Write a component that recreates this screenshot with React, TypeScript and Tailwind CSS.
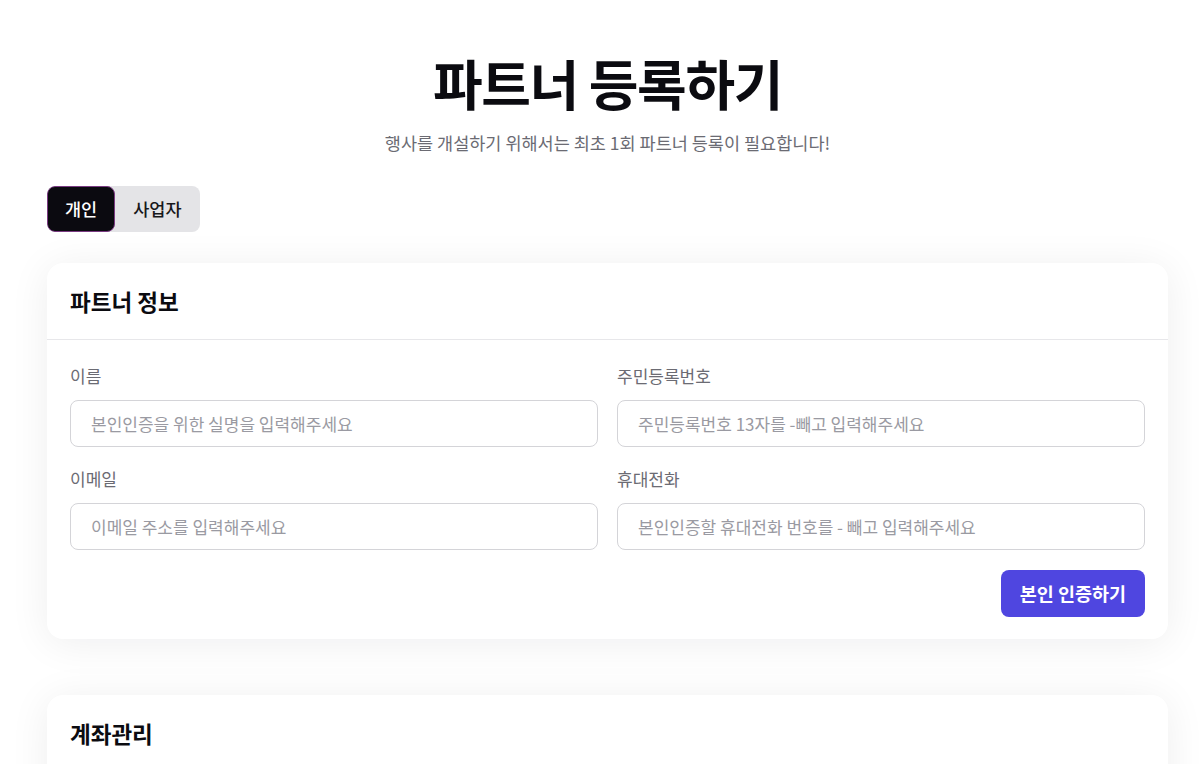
import { useState } from "react";

const font = { fontFamily: '"Noto Sans CJK KR", "Noto Sans", sans-serif' };

type FieldProps = {
  label: string;
  placeholder: string;
};

const Field = ({ label, placeholder }: FieldProps) => (
  <label className="flex flex-col gap-3">
    <span className="text-[17px] leading-6 text-[#6b6b73]">{label}</span>
    <input
      className="h-[47px] w-full rounded-lg border border-[#d4d4d8] bg-white px-5 text-[17px] text-[#18181b] outline-none placeholder:text-[#9a9aa2]"
      placeholder={placeholder}
    />
  </label>
);

export default function App() {
  const [tab, setTab] = useState<"personal" | "business">("personal");

  return (
    <div className="h-screen overflow-hidden bg-white pl-[47px] pr-[32px] pt-[56px]" style={font}>
      <div className="flex flex-col items-center">
        <h1 className="text-[54px] font-bold leading-none tracking-tight text-[#0b0b10]">
          파트너 등록하기
        </h1>
        <p className="mt-[21px] text-[17.5px] leading-6 text-[#6b6b73]">
          행사를 개설하기 위해서는 최초 1회 파트너 등록이 필요합니다!
        </p>
      </div>

      <div className="mt-[31px] flex">
        <div className="flex overflow-hidden rounded-lg bg-[#e4e4e7]">
          <button
            onClick={() => setTab("personal")}
            className={
              tab === "personal"
                ? "h-[46px] rounded-lg border border-[#7a3a82] bg-[#0b0a10] px-[17px] text-[17.5px] font-medium text-white"
                : "h-[46px] px-[17px] text-[17.5px] font-medium text-[#18181b]"
            }
          >
            개인
          </button>
          <button
            onClick={() => setTab("business")}
            className={
              tab === "business"
                ? "h-[46px] rounded-lg border border-[#7a3a82] bg-[#0b0a10] px-[18px] text-[17.5px] font-medium text-white"
                : "h-[46px] px-[18px] text-[17.5px] font-medium text-[#18181b]"
            }
          >
            사업자
          </button>
        </div>
      </div>

      <section className="mt-[31px] rounded-2xl bg-white shadow-[0_4px_40px_rgba(15,15,30,0.07)]">
        <div className="border-b border-[#e7e7ea] px-[23px] py-6">
          <h2 className="text-[22.5px] font-bold leading-7 text-[#0b0b10]">파트너 정보</h2>
        </div>
        <div className="px-[23px] pb-[22px] pt-6">
          <div className="grid grid-cols-2 gap-x-[19px] gap-y-5">
            <Field label="이름" placeholder="본인인증을 위한 실명을 입력해주세요" />
            <Field label="주민등록번호" placeholder="주민등록번호 13자를 -빼고 입력해주세요" />
            <Field label="이메일" placeholder="이메일 주소를 입력해주세요" />
            <Field label="휴대전화" placeholder="본인인증할 휴대전화 번호를 - 빼고 입력해주세요" />
          </div>
          <div className="mt-5 flex justify-end">
            <button className="h-[47px] rounded-lg bg-[#4f46e0] px-[19px] text-[18.5px] font-bold text-white">
              본인 인증하기
            </button>
          </div>
        </div>
      </section>

      <section className="mt-[56px] rounded-2xl bg-white shadow-[0_4px_40px_rgba(15,15,30,0.07)]">
        <div className="border-b border-[#e7e7ea] px-[23px] py-6">
          <h2 className="text-[22.5px] font-bold leading-7 text-[#0b0b10]">계좌관리</h2>
        </div>
        <div className="h-40" />
      </section>
    </div>
  );
}
